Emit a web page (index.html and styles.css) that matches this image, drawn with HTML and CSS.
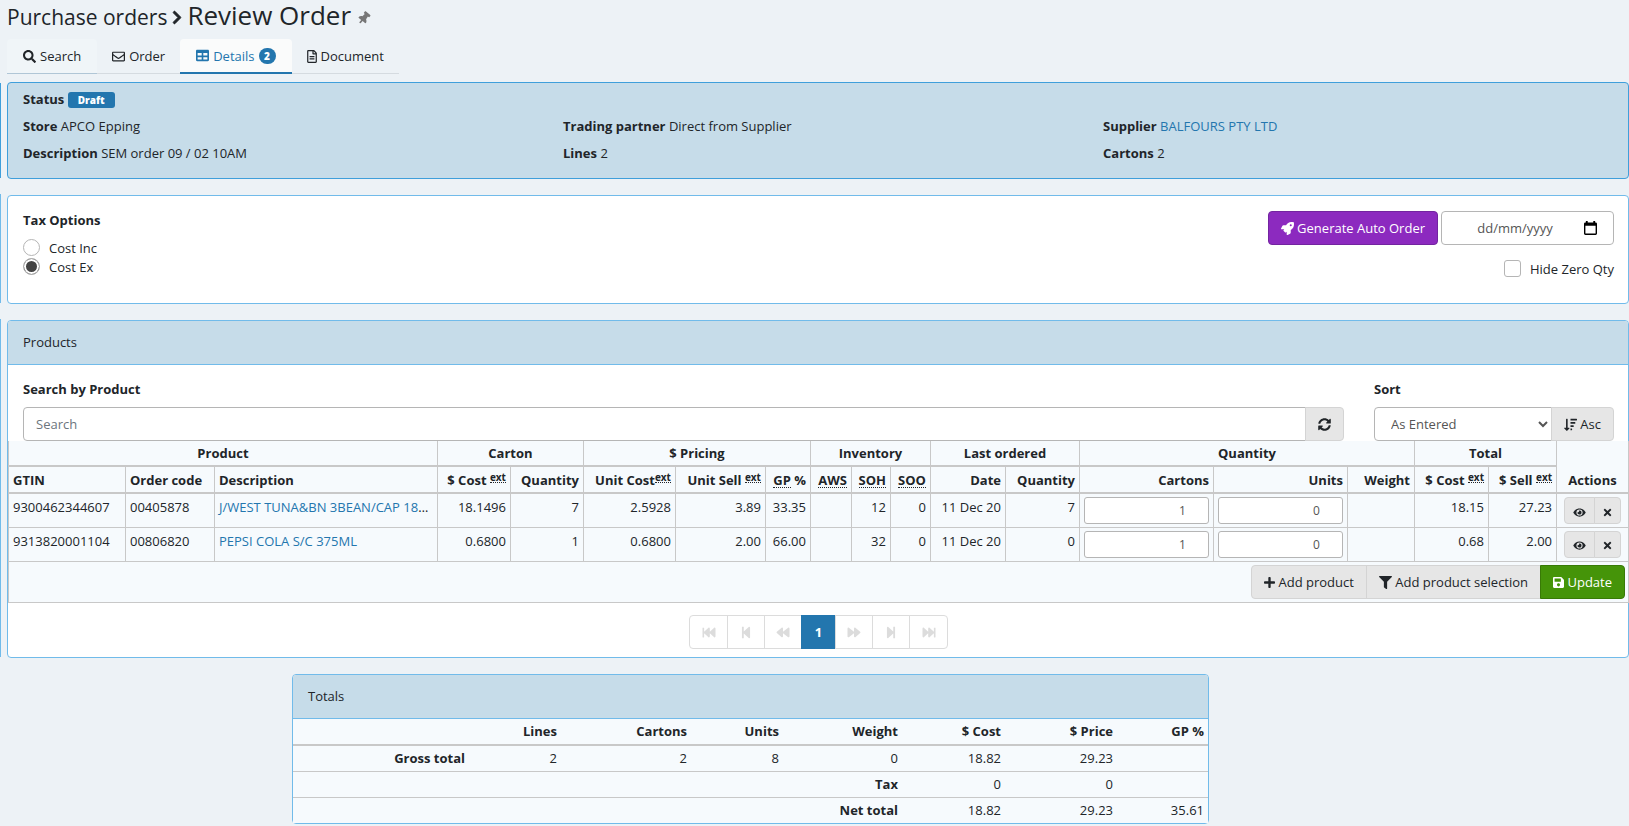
FILE: index.html
```html
<!DOCTYPE html>
<html lang="en">
<head>
<meta charset="utf-8">
<title>Review Order</title>
<link rel="stylesheet" href="styles.css">
</head>
<body>
<svg class="sprite" aria-hidden="true">
<symbol id="chevron" viewBox="0 0 320 512"><path d="M285.476 272.971L91.132 467.314c-9.373 9.373-24.569 9.373-33.941 0l-22.667-22.667c-9.357-9.357-9.375-24.522-.04-33.901L188.505 256 34.484 101.255c-9.335-9.379-9.317-24.544.04-33.901l22.667-22.667c9.373-9.373 24.569-9.373 33.941 0L285.475 239.03c9.373 9.372 9.373 24.568.001 33.941z" stroke="currentColor" stroke-width="24"/></symbol>
<symbol id="pin" viewBox="0 0 384 512"><path d="M298 28l-212 0c-15 0-24 10-24 24v48c0 14 10 24 24 24h30l-11 118C56 270 20 310 20 352c0 14 10 24 24 24h116v96l24 40h16l24-40v-96h116c14 0 24-10 24-24 0-42-36-82-85-110L268 124h30c14 0 24-10 24-24V52c0-14-10-24-24-24z"/></symbol>
<symbol id="search" viewBox="0 0 512 512"><path d="M505 442.700L405.300 343c-4.500-4.500-10.600-7-17-7H372c27.600-35.300 44-79.700 44-128C416 93.100 322.900 0 208 0S0 93.100 0 208s93.100 208 208 208c48.300 0 92.700-16.400 128-44v16.300c0 6.400 2.500 12.500 7 17l99.700 99.700c9.400 9.400 24.600 9.400 33.900 0l28.300-28.300c9.400-9.400 9.400-24.600.1-34zM208 336c-70.700 0-128-57.200-128-128 0-70.700 57.200-128 128-128 70.700 0 128 57.200 128 128 0 70.700-57.200 128-128 128z"/></symbol>
<symbol id="envelope" viewBox="0 0 512 512"><path d="M464 64H48C21.490 64 0 85.490 0 112v288c0 26.510 21.490 48 48 48h416c26.510 0 48-21.490 48-48V112c0-26.510-21.490-48-48-48zm0 48v40.805c-22.422 18.259-58.168 46.651-134.587 106.490-16.841 13.247-50.201 45.072-73.413 44.701-23.208.375-56.579-31.459-73.413-44.701C106.180 199.465 70.425 171.067 48 152.805V112h416zM48 400V214.398c22.914 18.251 55.409 43.862 104.938 82.646 21.857 17.205 60.134 55.186 103.062 54.955 42.717.231 80.509-37.199 103.053-54.947 49.528-38.783 82.032-64.401 104.947-82.653V400H48z"/></symbol>
<symbol id="table" viewBox="0 0 512 512"><path d="M464 32H48C21.490 32 0 53.490 0 80v352c0 26.510 21.490 48 48 48h416c26.510 0 48-21.490 48-48V80c0-26.510-21.490-48-48-48zM224 416H64v-96h160v96zm0-160H64v-96h160v96zm224 160H288v-96h160v96zm0-160H288v-96h160v96z"/></symbol>
<symbol id="file" viewBox="0 0 384 512"><path d="M288 248v28c0 6.600-5.400 12-12 12H108c-6.600 0-12-5.400-12-12v-28c0-6.600 5.400-12 12-12h168c6.600 0 12 5.400 12 12zm-12 72H108c-6.600 0-12 5.400-12 12v28c0 6.600 5.400 12 12 12h168c6.600 0 12-5.400 12-12v-28c0-6.600-5.400-12-12-12zm108-188.100V464c0 26.500-21.500 48-48 48H48c-26.500 0-48-21.500-48-48V48C0 21.500 21.500 0 48 0h204.100C264.800 0 277 5.100 286 14.100L369.900 98c9 8.900 14.100 21.200 14.100 33.900zm-128-80V128h76.100L256 51.900zM336 464V176H232c-13.300 0-24-10.700-24-24V48H48v416h288z"/></symbol>
<symbol id="rocket" viewBox="0 0 512 512"><path d="M505.120 19.094c-1.189-5.531-6.658-11-12.207-12.187C460.716 0 435.507 0 410.407 0 307.175 0 245.269 55.203 199.052 128H94.838c-16.348.016-35.557 11.875-42.887 26.484L2.516 253.297A28.400 28.400 0 0 0 0 264a24.008 24.008 0 0 0 24.006 24h103.846l-22.474 22.469c-11.365 11.361-12.996 32.258 0 45.250l50.904 50.906c11.156 11.188 32.220 13.156 45.277 0L224 384.156V488a24.008 24.008 0 0 0 24.002 24 28.560 28.560 0 0 0 10.707-2.516l98.728-49.390c14.629-7.297 26.508-26.500 26.508-42.860V312.798c72.598-46.313 128.030-108.407 128.030-211.094.077-25.204.077-50.408-6.855-82.610zM384.040 168a40 40 0 1 1 40-40 40.023 40.023 0 0 1-40 40z"/></symbol>
<symbol id="calendar" viewBox="0 0 14 15"><path d="M0 3a1.500 1.500 0 0 1 1.500-1.500H2V0h2v1.500h6V0h2v1.500h.5A1.500 1.500 0 0 1 14 3v10.500a1.500 1.500 0 0 1-1.500 1.500h-11A1.500 1.500 0 0 1 0 13.500zM1.500 5v8.500h11V5z"/></symbol>
<symbol id="sync" viewBox="0 0 512 512"><path d="M370.720 133.280C339.458 104.008 298.888 87.962 255.848 88c-77.458.068-144.328 53.178-162.791 126.850-1.344 5.363-6.122 9.150-11.651 9.150H24.103c-7.498 0-13.194-6.807-11.807-14.176C33.933 94.924 134.813 8 256 8c66.448 0 126.791 26.136 171.315 68.685L463.030 40.970C478.149 25.851 504 36.559 504 57.941V192c0 13.255-10.745 24-24 24H345.941c-21.382 0-32.090-25.851-16.971-40.971l41.750-41.749zM32 296h134.059c21.382 0 32.090 25.851 16.971 40.971l-41.750 41.750c31.262 29.273 71.835 45.319 114.876 45.280 77.418-.070 144.315-53.144 162.787-126.849 1.344-5.363 6.122-9.150 11.651-9.150h57.304c7.498 0 13.194 6.807 11.807 14.176C478.067 417.076 377.187 504 256 504c-66.448 0-126.791-26.136-171.315-68.685L48.970 471.030C33.851 486.149 8 475.441 8 454.059V320c0-13.255 10.745-24 24-24z"/></symbol>
<symbol id="sortdown" viewBox="0 0 512 512"><path d="M200 384h-56V48a16 16 0 0 0-16-16H96a16 16 0 0 0-16 16v336H24c-15 0-23 17-12 28l88 92a17 17 0 0 0 24 0l88-92c11-11 2-28-12-28zM256 96h240a16 16 0 0 0 16-16V48a16 16 0 0 0-16-16H256zM256 224h176a16 16 0 0 0 16-16v-32a16 16 0 0 0-16-16H256zM256 352h112a16 16 0 0 0 16-16v-32a16 16 0 0 0-16-16H256zM256 480h48a16 16 0 0 0 16-16v-32a16 16 0 0 0-16-16h-48z"/></symbol>
<symbol id="eye" viewBox="0 0 576 512"><path d="M572.520 241.400C518.290 135.590 410.930 64 288 64S57.680 135.640 3.480 241.410a32.350 32.350 0 0 0 0 29.190C57.710 376.410 165.070 448 288 448s230.320-71.640 284.520-177.410a32.350 32.350 0 0 0 0-29.190zM288 400a144 144 0 1 1 144-144 143.930 143.930 0 0 1-144 144zm0-240a95.310 95.310 0 0 0-25.310 3.790 47.850 47.850 0 0 1-66.900 66.900A95.780 95.780 0 1 0 288 160z"/></symbol>
<symbol id="times" viewBox="0 0 352 512"><path d="M242.720 256l100.070-100.070c12.280-12.280 12.280-32.190 0-44.480l-22.240-22.240c-12.280-12.280-32.190-12.280-44.480 0L176 189.280 75.930 89.210c-12.280-12.280-32.190-12.280-44.480 0L9.210 111.450c-12.280 12.280-12.280 32.190 0 44.480L109.280 256 9.210 356.070c-12.280 12.280-12.280 32.190 0 44.480l22.240 22.240c12.280 12.280 32.200 12.280 44.480 0L176 322.720l100.070 100.070c12.280 12.280 32.200 12.280 44.480 0l22.240-22.240c12.280-12.280 12.280-32.190 0-44.480L242.720 256z"/></symbol>
<symbol id="plus" viewBox="0 0 448 512"><path d="M416 208H272V64c0-17.670-14.330-32-32-32h-32c-17.670 0-32 14.330-32 32v144H32c-17.670 0-32 14.330-32 32v32c0 17.670 14.330 32 32 32h144v144c0 17.670 14.330 32 32 32h32c17.670 0 32-14.330 32-32V304h144c17.670 0 32-14.330 32-32v-32c0-17.670-14.330-32-32-32z"/></symbol>
<symbol id="filter" viewBox="0 0 512 512"><path d="M487.976 0H24.028C2.710 0-8.047 25.866 7.058 40.971L192 225.941V432c0 7.831 3.821 15.170 10.237 19.662l80 55.980C298.020 518.690 320 507.493 320 487.980V225.941l184.947-184.970C520.021 25.896 509.338 0 487.976 0z"/></symbol>
<symbol id="save" viewBox="0 0 448 512"><path fill-rule="evenodd" d="M433.941 129.941l-83.882-83.882A48 48 0 0 0 316.118 32H48C21.490 32 0 53.490 0 80v352c0 26.510 21.490 48 48 48h352c26.510 0 48-21.490 48-48V163.882a48 48 0 0 0-14.059-33.941zM224 416c-35.346 0-64-28.654-64-64 0-35.346 28.654-64 64-64s64 28.654 64 64c0 35.346-28.654 64-64 64zm96-304.520V212c0 6.627-5.373 12-12 12H76c-6.627 0-12-5.373-12-12V108c0-6.627 5.373-12 12-12h228.520c3.183 0 6.235 1.264 8.485 3.515l3.480 3.480A11.996 11.996 0 0 1 320 111.480z"/></symbol>
<symbol id="fast" viewBox="0 0 512 512"><path d="M0 436V76c0-7 5-12 12-12h40c7 0 12 5 12 12v152L236 71c21-17 52-2 52 25v132L460 71c21-17 52-2 52 25v320c0 27-32 42-52 25L288 286v130c0 27-32 42-52 25L64 286v150c0 7-5 12-12 12H12c-7 0-12-5-12-12z"/></symbol>
<symbol id="step" viewBox="0 0 448 512"><path d="M64 468V44c0-7 5-12 12-12h48c7 0 12 5 12 12v176L332 39c20-17 52-2 52 25v384c0 27-32 42-52 25L136 293v175c0 7-5 12-12 12H76c-7 0-12-5-12-12z"/></symbol>
<symbol id="back" viewBox="0 0 512 512"><path d="M12 280l192 160c20 17 52 3 52-24V286l204 154c20 17 52 3 52-24V96c0-27-32-42-52-25L256 228V96c0-27-32-42-52-25L12 231c-16 13-16 37 0 49z"/></symbol>
</svg>

<aside class="previous" aria-hidden="true"><i class="edge edge-status"></i><i class="edge edge-tax"></i><i class="edge edge-products"></i></aside>
<main class="page">
<header class="crumbs">
<a class="crumb" href="#">Purchase orders</a>
<svg class="icon chevron"><use href="#chevron"/></svg>
<h1 class="title">Review Order</h1>
<button class="pin" aria-label="Pin page"><svg class="icon"><use href="#pin"/></svg></button>
</header>

<nav class="tabs">
<a class="tab hover" href="#"><svg class="icon"><use href="#search"/></svg> Search</a>
<a class="tab" href="#"><svg class="icon"><use href="#envelope"/></svg> Order</a>
<a class="tab active" href="#"><svg class="icon"><use href="#table"/></svg> Details <span class="count">2</span></a>
<a class="tab" href="#"><svg class="icon narrow"><use href="#file"/></svg> Document</a>
</nav>

<section class="card status">
<p class="wide"><b>Status</b> <span class="badge">Draft</span></p>
<p><b>Store</b> APCO Epping</p>
<p><b>Trading partner</b> Direct from Supplier</p>
<p><b>Supplier</b> <a href="#">BALFOURS PTY LTD</a></p>
<p><b>Description</b> SEM order 09 / 02 10AM</p>
<p><b>Lines</b> 2</p>
<p><b>Cartons</b> 2</p>
</section>

<section class="card tax">
<fieldset class="options">
<legend>Tax Options</legend>
<label class="choice"><input type="radio" name="tax"> Cost Inc</label>
<label class="choice"><input type="radio" name="tax" checked> Cost Ex</label>
</fieldset>
<div class="auto">
<div class="auto-row">
<button class="btn purple"><svg class="icon"><use href="#rocket"/></svg> Generate Auto Order</button>
<div class="field date"><input type="text" placeholder="dd/mm/yyyy" aria-label="Order date"><button aria-label="Choose date"><svg class="icon calendar"><use href="#calendar"/></svg></button></div>
</div>
<label class="choice"><input type="checkbox"> Hide Zero Qty</label>
</div>
</section>

<section class="card">
<h2 class="card-head">Products</h2>
<div class="filters">
<div class="filter grow">
<label class="caption" for="q">Search by Product</label>
<div class="group"><input class="field grow" id="q" type="text" placeholder="Search"><button class="btn" aria-label="Refresh"><svg class="icon"><use href="#sync"/></svg></button></div>
</div>
<div class="filter sort">
<label class="caption" for="sort">Sort</label>
<div class="group"><select class="field grow" id="sort"><option>As Entered</option></select><button class="btn"><svg class="icon"><use href="#sortdown"/></svg> Asc</button></div>
</div>
</div>
<table class="grid products">
<colgroup><col class="w117"><col class="w89"><col><col class="w73"><col class="w73"><col class="w92"><col class="w90"><col class="w45"><col class="w41"><col class="w39"><col class="w40"><col class="w75"><col class="w74"><col class="w134"><col class="w134"><col class="w67"><col class="w74"><col class="w68"><col class="w72"></colgroup>
<thead>
<tr class="groups"><th colspan="3">Product</th><th colspan="2">Carton</th><th colspan="3">$ Pricing</th><th colspan="3">Inventory</th><th colspan="2">Last ordered</th><th colspan="3">Quantity</th><th colspan="2">Total</th><th rowspan="2" class="actions">Actions</th></tr>
<tr><th class="l">GTIN</th><th class="l">Order code</th><th class="l">Description</th><th>$ Cost <sup><abbr title="Extended">ext</abbr></sup></th><th>Quantity</th><th>Unit Cost<sup><abbr title="Extended">ext</abbr></sup></th><th>Unit Sell <sup><abbr title="Extended">ext</abbr></sup></th><th><abbr title="Gross profit">GP</abbr> %</th><th><abbr title="Average weekly sales">AWS</abbr></th><th><abbr title="Stock on hand">SOH</abbr></th><th><abbr title="Stock on order">SOO</abbr></th><th>Date</th><th>Quantity</th><th>Cartons</th><th>Units</th><th>Weight</th><th>$ Cost <sup><abbr title="Extended">ext</abbr></sup></th><th>$ Sell <sup><abbr title="Extended">ext</abbr></sup></th></tr>
</thead>
<tbody>
<tr><td class="l">9300462344607</td><td class="l">00405878</td><td class="l clip"><a href="#">J/WEST TUNA&amp;BN 3BEAN/CAP 185G</a></td><td>18.1496</td><td>7</td><td>2.5928</td><td>3.89</td><td>33.35</td><td></td><td>12</td><td>0</td><td>11 Dec 20</td><td>7</td><td><input class="qty" type="number" value="1" aria-label="Cartons"></td><td><input class="qty" type="number" value="0" aria-label="Units"></td><td></td><td>18.15</td><td>27.23</td><td><div class="group mini"><button class="btn" aria-label="View"><svg class="icon eye"><use href="#eye"/></svg></button><button class="btn" aria-label="Remove"><svg class="icon thin"><use href="#times"/></svg></button></div></td></tr>
<tr><td class="l">9313820001104</td><td class="l">00806820</td><td class="l clip"><a href="#">PEPSI COLA S/C 375ML</a></td><td>0.6800</td><td>1</td><td>0.6800</td><td>2.00</td><td>66.00</td><td></td><td>32</td><td>0</td><td>11 Dec 20</td><td>0</td><td><input class="qty" type="number" value="1" aria-label="Cartons"></td><td><input class="qty" type="number" value="0" aria-label="Units"></td><td></td><td>0.68</td><td>2.00</td><td><div class="group mini"><button class="btn" aria-label="View"><svg class="icon eye"><use href="#eye"/></svg></button><button class="btn" aria-label="Remove"><svg class="icon thin"><use href="#times"/></svg></button></div></td></tr>
</tbody>
<tfoot><tr><td colspan="19"><div class="group end"><button class="btn"><svg class="icon medium"><use href="#plus"/></svg> Add product</button><button class="btn"><svg class="icon"><use href="#filter"/></svg> Add product selection</button><button class="btn green"><svg class="icon medium"><use href="#save"/></svg> Update</button></div></td></tr></tfoot>
</table>
<nav class="pager" aria-label="Pages">
<button aria-label="First" disabled><svg class="icon"><use href="#fast"/></svg></button><button aria-label="Previous set" disabled><svg class="icon"><use href="#step"/></svg></button><button aria-label="Previous" disabled><svg class="icon"><use href="#back"/></svg></button><button class="current">1</button><button aria-label="Next" disabled><svg class="icon flip"><use href="#back"/></svg></button><button aria-label="Next set" disabled><svg class="icon flip"><use href="#step"/></svg></button><button aria-label="Last" disabled><svg class="icon flip"><use href="#fast"/></svg></button>
</nav>
</section>

<section class="card totals">
<h2 class="card-head">Totals</h2>
<table class="grid sums">
<colgroup><col><col class="w92"><col class="w130"><col class="w92"><col class="w119"><col class="w103"><col class="w112"><col class="w91"></colgroup>
<thead><tr><th></th><th>Lines</th><th>Cartons</th><th>Units</th><th>Weight</th><th>$ Cost</th><th>$ Price</th><th>GP %</th></tr></thead>
<tbody>
<tr><th>Gross total</th><td>2</td><td>2</td><td>8</td><td>0</td><td>18.82</td><td>29.23</td><td></td></tr>
<tr><th colspan="5">Tax</th><td>0</td><td>0</td><td></td></tr>
<tr><th colspan="5">Net total</th><td>18.82</td><td>29.23</td><td>35.61</td></tr>
</tbody>
</table>
</section>
</main>
</body>
</html>
```
FILE: styles.css
```css
* { box-sizing: border-box; }
body {
  margin: 0;
  display: flex;
  background: #edf2f6;
  color: #212529;
  font: 13px/20px "Open Sans", "Noto Sans", sans-serif;
}
a { color: #2376ae; text-decoration: none; }
b, th, legend, .caption { font-weight: 700; }
p, h1, h2 { margin: 0; font-weight: 400; }
button, input, select { font: inherit; color: inherit; }
button { cursor: pointer; }
.sprite { position: absolute; width: 0; height: 0; }
.icon { width: 13px; height: 13px; fill: currentColor; vertical-align: -2px; flex: none; }
.icon.medium { width: 11px; }
.icon.narrow { width: 10px; }
.icon.thin { width: 9px; }

/* right edge of the panels in the preceding column */
.previous { width: 7px; flex: none; display: flex; flex-direction: column; padding-top: 83px; gap: 16px; }
.edge { width: 1px; background: #71bbea; }
.edge-status { height: 95px; background: #3f9fdb; }
.edge-tax { height: 109px; }
.edge-products { height: 338px; }

.page { flex: 1; min-width: 0; display: flex; flex-direction: column; }
.crumbs { display: flex; align-items: baseline; height: 39px; line-height: 30px; }
.crumb { color: inherit; font-size: 21px; }
.icon.chevron { width: 10px; height: 15px; margin: 0 5px; }
.title { font-size: 26px; }
.pin { border: 0; background: none; padding: 0; margin-left: 6px; color: #777; }
.pin .icon { width: 14px; height: 14px; transform: rotate(40deg); vertical-align: 0; }

.tabs { display: flex; height: 35px; margin-bottom: 8px; }
.tab { display: flex; align-items: center; gap: 4px; padding: 0 15px; color: inherit; border-bottom: 1px solid #d5dbe0; }
.tab.hover { background: #f0f5f8; border-color: #b0c6d6; border-radius: 4px 4px 0 0; padding: 0 16px; }
.tab.active { color: #2376ae; background: #fafbfb; border-bottom: 2px solid #2376ae; border-radius: 4px 4px 0 0; padding: 0 16px; }
.count { width: 17px; border-radius: 9px; background: #2376ae; color: #fff; font-size: 10px; font-weight: 800; line-height: 16px; text-align: center; }

.card { border: 1px solid #71bbea; border-radius: 4px; background: #fff; margin-bottom: 16px; }
.status {
  display: grid; grid-template-columns: repeat(3, 1fr); row-gap: 7px;
  padding: 6px 0 15px; background: #c6dce9; border-color: #3f9fdb;
}
.status p { padding-left: 15px; }
.wide { grid-column: 1 / -1; }
.badge { display: inline-block; padding: 0 10px; border-radius: 3px; background: #2376ae; color: #fff; font-size: 10px; font-weight: 800; line-height: 16px; }

.tax { display: flex; justify-content: space-between; padding: 14px 14px 14px 15px; height: 109px; }
.options { border: 0; padding: 0; margin: 0; }
legend { padding: 0; margin-bottom: 8px; }
.choice { display: flex; align-items: center; gap: 9px; height: 19px; }
.choice input { appearance: none; width: 17px; height: 17px; margin: 0; border: 1px solid #b5b5b5; border-radius: 3px; background: #fff; }
.choice input[type=radio] { border-radius: 50%; }
.choice input[type=radio]:checked { background: #444; box-shadow: inset 0 0 0 2px #fff; }
.auto { display: flex; flex-direction: column; align-items: flex-end; gap: 14px; padding-top: 1px; }
.auto-row { display: flex; gap: 3px; }
.field { height: 34px; min-width: 0; border: 1px solid #b5b5b5; border-radius: 4px; background: #fff; padding: 0 12px; color: #555; }
.date { display: flex; align-items: center; width: 173px; padding: 0 16px; }
.date input { flex: 1; min-width: 0; border: 0; padding: 0 12px 0 0; text-align: center; background: none; }
.date button { display: flex; border: 0; padding: 0; background: none; color: #000; }
.icon.calendar { width: 13px; height: 14px; }
::placeholder { color: #6c757d; }
.date ::placeholder { color: #555; }
.btn { height: 34px; padding: 0 12px; border: 1px solid #d4d4d4; border-radius: 4px; background: #e6e6e6; white-space: nowrap; }
.purple { background: #8c2abf; border-color: #7324a0; color: #fff; }
.green { background: #459409; border-color: #387a06; color: #fff; }

.card-head { font-size: 13px; line-height: 20px; padding: 11px 15px 12px; background: #c6dce9; border-bottom: 1px solid #71bbea; border-radius: 3px 3px 0 0; }
.filters { display: flex; gap: 30px; padding: 14px 14px 0 15px; }
.filter { display: flex; flex-direction: column; gap: 8px; }
.grow { flex: 1; }
.sort { width: 240px; }
.group { display: flex; }
.group > * + * { margin-left: -1px; border-top-left-radius: 0; border-bottom-left-radius: 0; }
.group > :not(:last-child) { border-top-right-radius: 0; border-bottom-right-radius: 0; }
.end { justify-content: flex-end; }

.grid { width: 100%; table-layout: fixed; border-collapse: collapse; background: #f6fafd; }
.grid th, .grid td { padding: 3px 4px 2px; text-align: right; vertical-align: top; white-space: nowrap; line-height: 20px; border: 1px solid #c8c8c8; }
.grid .l { text-align: left; }
.grid .clip { overflow: hidden; text-overflow: ellipsis; }
.grid thead th { border-bottom-width: 2px; }
.products { width: calc(100% + 1px); }
.products thead tr:first-child > * { border-top: 0; }
.grid .groups th { text-align: center; padding-top: 2px; }
.grid .groups .actions { vertical-align: bottom; }
.products tbody td { height: 34px; }
.products tfoot td { padding: 3px; }
abbr { text-decoration: none; border-bottom: 1px dotted #212529; display: inline-block; line-height: 14px; }
sup { font-size: 10px; line-height: 0; vertical-align: 4px; }
sup abbr { line-height: 10px; }
.qty { display: block; width: 100%; height: 27px; border: 1px solid #b5b5b5; border-radius: 3px; background: #fff; padding: 0 7px; text-align: right; font-size: 12px; color: #555; }
.mini { justify-content: center; }
.mini .btn { height: 27px; padding: 0 8px; }
.mini .icon { height: 11px; }
.w39 { width: 39px; } .w40 { width: 40px; } .w41 { width: 41px; } .w45 { width: 45px; }
.w67 { width: 67px; } .w68 { width: 68px; } .w72 { width: 72px; } .w73 { width: 73px; }
.w74 { width: 74px; } .w75 { width: 75px; } .w89 { width: 89px; } .w90 { width: 90px; }
.w91 { width: 91px; } .w92 { width: 92px; } .w103 { width: 103px; } .w112 { width: 112px; }
.w117 { width: 117px; } .w119 { width: 119px; } .w130 { width: 130px; } .w134 { width: 134px; }

.pager { display: flex; justify-content: center; padding: 12px 0 8px 2px; }
.pager button { width: 38px; height: 34px; margin-left: -1px; padding: 0; border: 1px solid #dcdcdc; background: #fff; color: #dcdcdc; }
.pager button:first-child { width: 39px; border-radius: 4px 0 0 4px; }
.pager button:last-child { width: 39px; border-radius: 0 4px 4px 0; }
.pager .current { width: 35px; background: #2376ae; border-color: #2376ae; color: #fff; font-weight: 700; }
.pager .icon { width: 14px; }
.flip { transform: scaleX(-1); }

.totals { width: 917px; max-width: 100%; margin: 0 0 0 285px; }
.grid.sums th, .grid.sums td { padding: 2px 4px 3px; border-width: 1px 0 0; }
.grid.sums thead th { border-width: 0 0 2px; }
```
